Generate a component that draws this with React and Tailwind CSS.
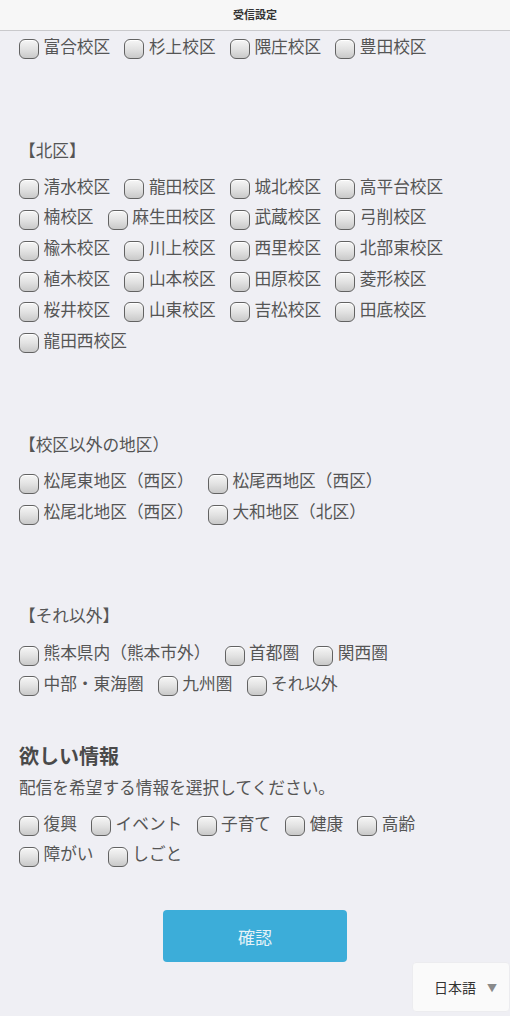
import React from "react";

const FONT = { fontFamily: '"Noto Sans CJK JP", "Noto Sans", sans-serif' };

const minami = ["富合校区", "杉上校区", "隈庄校区", "豊田校区"];
const kita = [
  "清水校区", "龍田校区", "城北校区", "高平台校区",
  "楠校区", "麻生田校区", "武蔵校区", "弓削校区",
  "楡木校区", "川上校区", "西里校区", "北部東校区",
  "植木校区", "山本校区", "田原校区", "菱形校区",
  "桜井校区", "山東校区", "吉松校区", "田底校区",
  "龍田西校区",
];
const others = ["松尾東地区（西区）", "松尾西地区（西区）", "松尾北地区（西区）", "大和地区（北区）"];
const outside = ["熊本県内（熊本市外）", "首都圏", "関西圏", "中部・東海圏", "九州圏", "それ以外"];
const topics = ["復興", "イベント", "子育て", "健康", "高齢", "障がい", "しごと"];

function Box() {
  return (
    <span className="mt-[6px] box-border inline-block h-5 w-5 shrink-0 rounded-[6px] border border-[#626262] bg-gradient-to-b from-[#f6f6f6] via-[#e2e2e2] to-[#c9c9c9] shadow-[inset_0_1px_0_#ffffff]" />
  );
}

function Item({ label }) {
  return (
    <label className="mr-[14.2px] flex h-[30.8px] items-center">
      <Box />
      <span className="ml-[4.5px] whitespace-nowrap">{label}</span>
    </label>
  );
}

function Group({ items, className = "" }) {
  return (
    <div className={"flex flex-wrap " + className}>
      {items.map((t) => (
        <Item key={t} label={t} />
      ))}
    </div>
  );
}

function Heading({ children }) {
  return <div className="mt-[76px] h-6 leading-6">{children}</div>;
}

export default function App() {
  return (
    <div className="relative min-h-screen bg-[#efeff4] text-[16.7px] text-[#555555]" style={FONT}>
      <header className="flex h-[31px] items-center justify-center border-b border-[#c9c9cc] bg-[#f7f7f7] pb-px">
        <span className="text-[11px] font-bold text-[#333333]">受信設定</span>
      </header>

      <main className="pl-[19px] pb-[54px]">
        <Group items={minami} />

        <Heading>【北区】</Heading>
        <Group items={kita} className="mt-[9px]" />

        <Heading>【校区以外の地区）</Heading>
        <Group items={others} className="mt-[10px]" />

        <Heading>【それ以外】</Heading>
        <Group items={outside} className="mt-[10px]" />

        <h2 className="mt-[43px] text-[20px] font-bold leading-7 text-[#4a4a4a]">欲しい情報</h2>
        <p className="mt-[5px] leading-6">配信を希望する情報を選択してください。</p>
        <Group items={topics} className="mt-[9px]" />

        <div className="mt-[41px] flex justify-center pr-[19px]">
          <button className="h-[52px] w-[184px] rounded-[4px] bg-[#3cadd9] text-[17px] text-[#e6f3f8]">
            確認
          </button>
        </div>
      </main>

      <div className="fixed bottom-[4px] right-0 flex h-[50px] w-[98px] items-center rounded-[4px] border border-[#ececef] bg-[#fafafa] pl-[21px] text-[14px] text-[#333333]">
        <span>日本語</span>
        <span className="ml-[11px] text-[10px] text-[#8a8a8a]">▼</span>
      </div>
    </div>
  );
}
